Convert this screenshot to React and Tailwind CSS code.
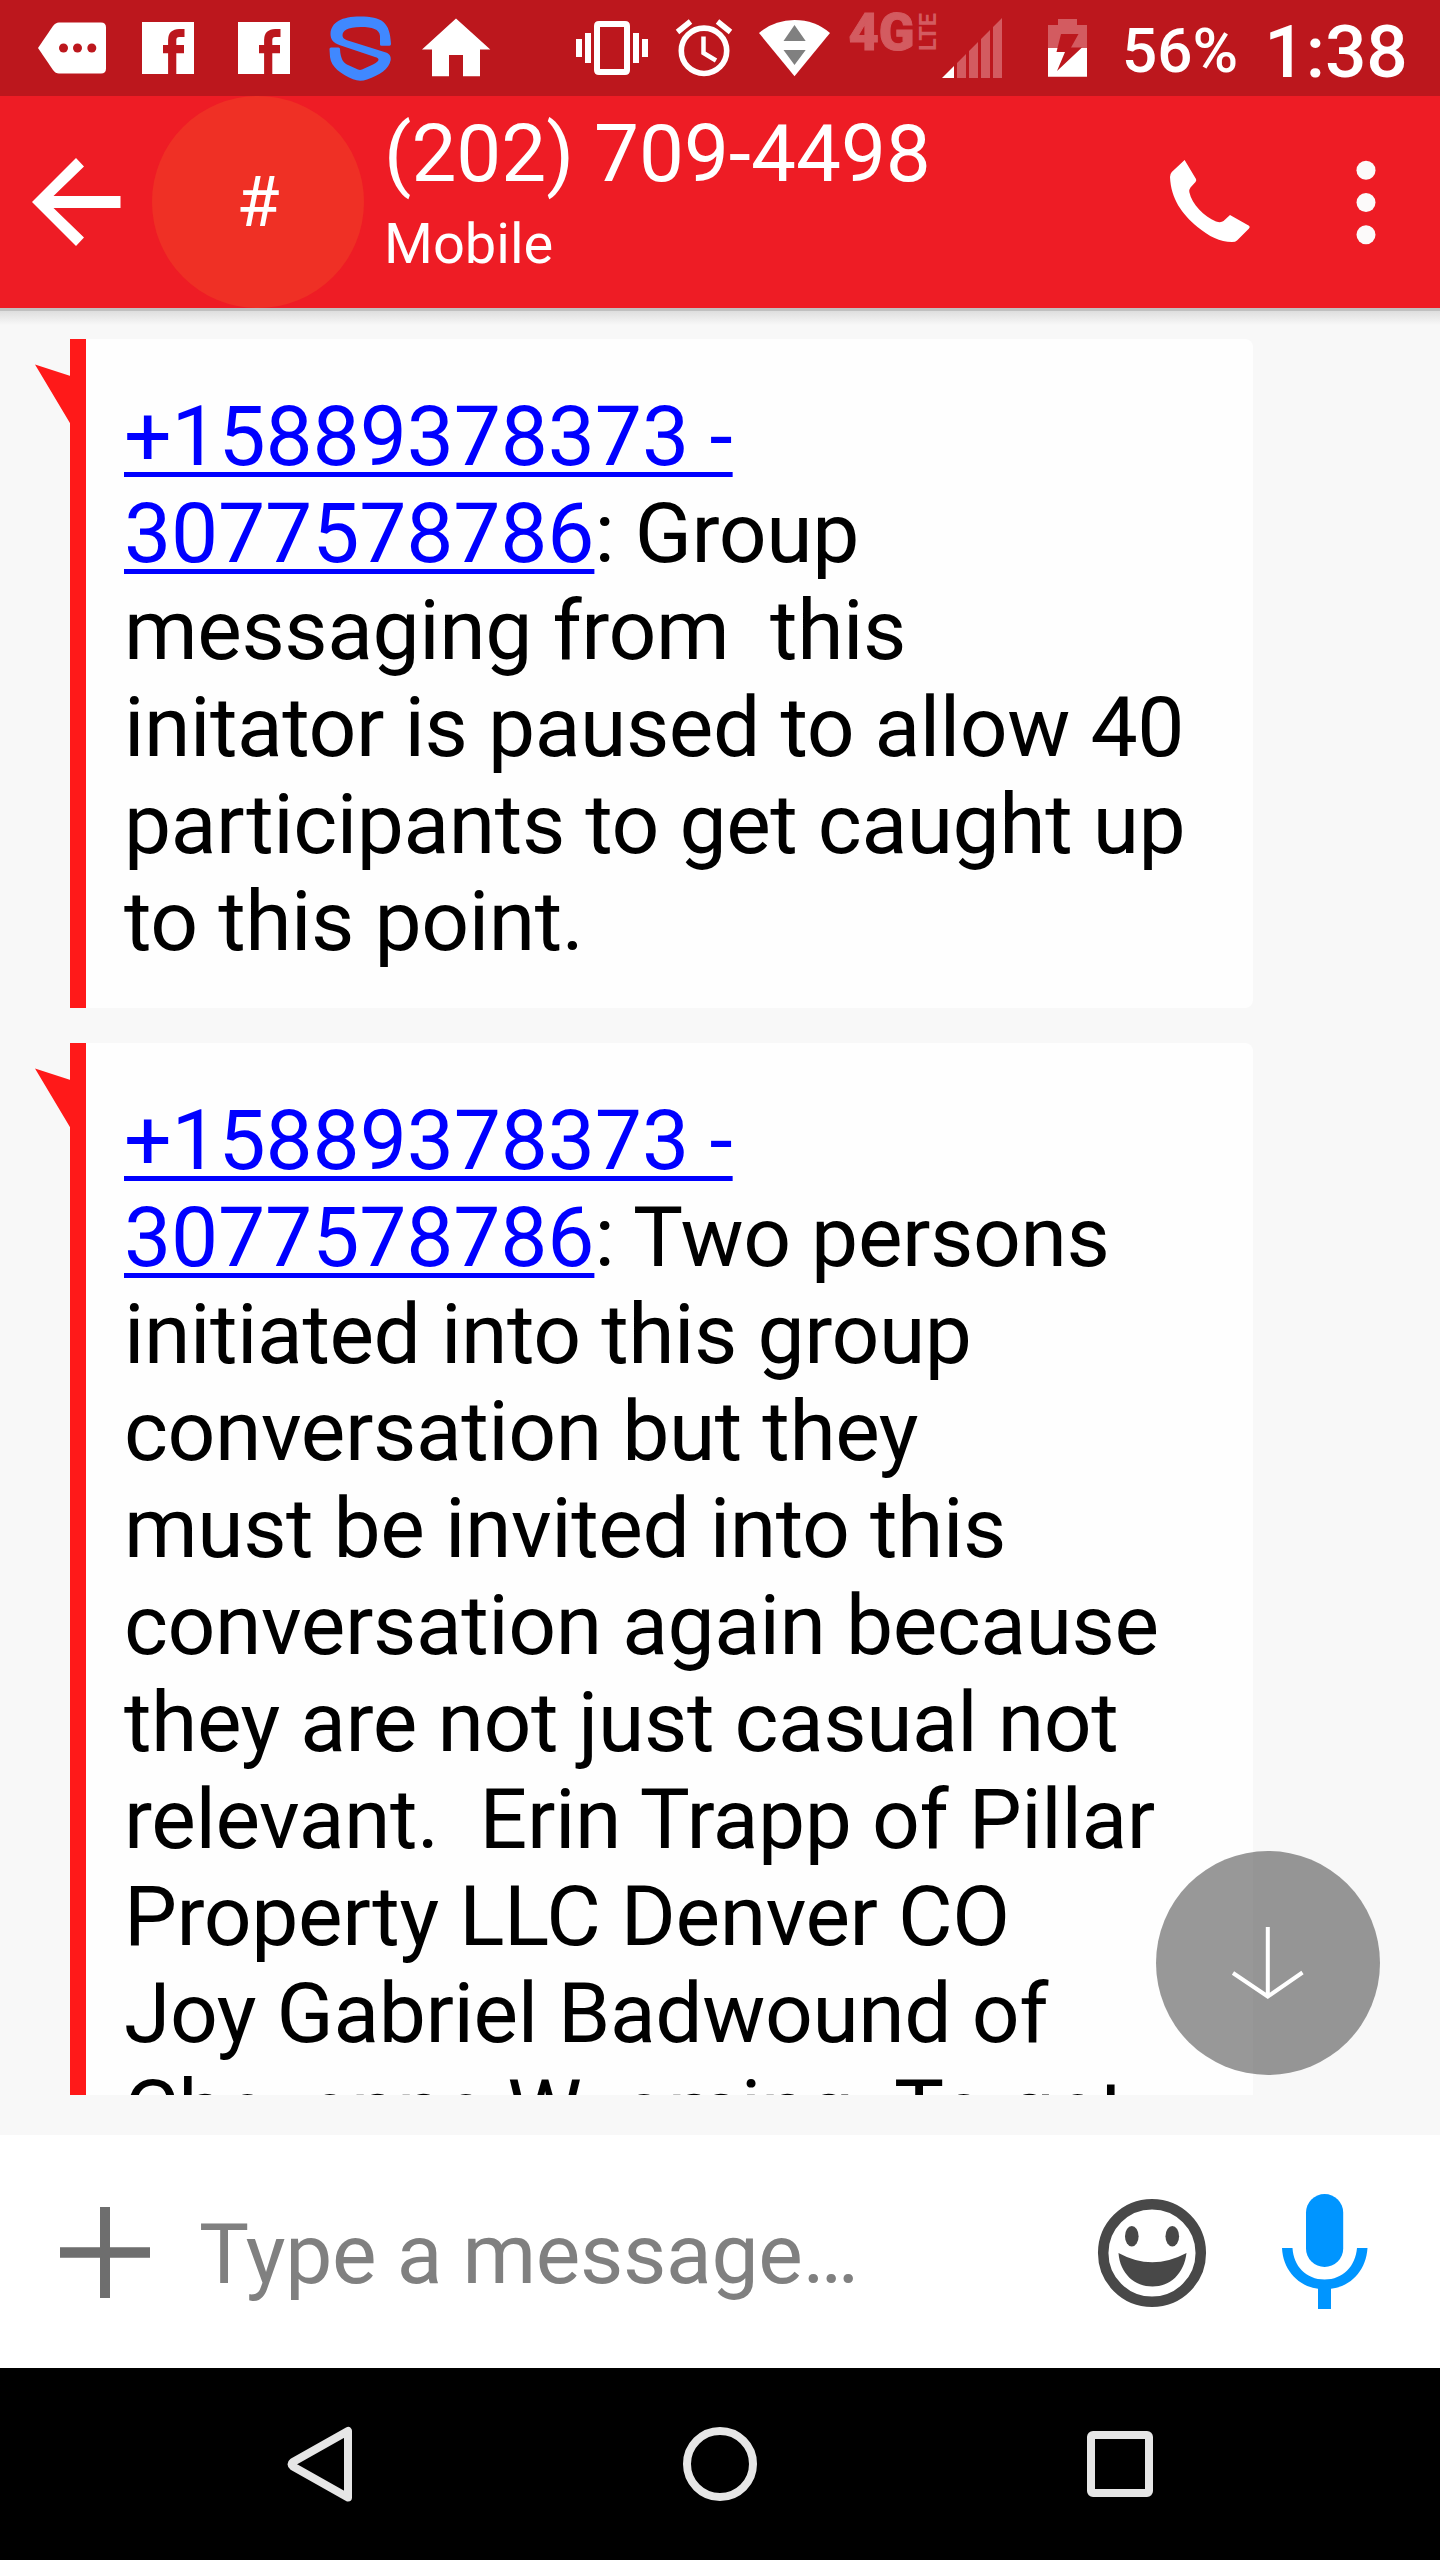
import React from 'react'

const messages = [
  {
    id: 1,
    sender: ['+15889378373 -', '3077578786'],
    first: ': Group',
    lines: [
      'messaging from  this',
      'initator is paused to allow 40',
      'participants to get caught up',
      'to this point.'
    ]
  },
  {
    id: 2,
    sender: ['+15889378373 -', '3077578786'],
    first: ': Two persons',
    lines: [
      'initiated into this group',
      'conversation but they',
      'must be invited into this',
      'conversation again because',
      'they are not just casual not',
      'relevant.  Erin Trapp of Pillar',
      'Property LLC Denver CO',
      'Joy Gabriel Badwound of',
      'Cheyenne Wyoming. To get'
    ]
  }
]

function FacebookIcon() {
  return (
    <svg viewBox="120 0 96 96" className="h-24 w-24 shrink-0">
      <path d="M142 22h52v52H142z" fill="#fff" />
      <path d="M172.200 74V40q0-7 7-7h5.300M163 49.200h21" fill="none" stroke="#bc171d" strokeWidth="8.200" />
    </svg>
  )
}

function StatusBar() {
  return (
    <div className="flex h-24 bg-[#bc171d] pl-6 text-white">
      <svg viewBox="24 0 96 96" className="h-24 w-24 shrink-0">
        <path d="M38 48 53 26q2.500-3.500 6-3.500h42q5 0 5 5v41q0 5-5 5H59q-3.500 0-6-3.500z" fill="#fff" />
        <g fill="#bc171d">
          <circle cx="63.500" cy="48" r="4.500" />
          <circle cx="77.500" cy="48" r="4.500" />
          <circle cx="91.800" cy="48" r="4.500" />
        </g>
      </svg>
      <FacebookIcon />
      <FacebookIcon />
      {/* Security app */}
      <svg viewBox="312 0 96 96" className="h-24 w-24 shrink-0">
        <path
          d="M380 44.500V36C379.500 29 372 27 361 27C347 27 342.500 31 342.500 35.500C342.500 38 344 39 347 40.300L386 52.500C389.500 53.800 391 56 390.700 60C389 69 380 75 367 79.500Q360 82 353 79.300C341 74 331 67 330 57L329.500 49Q329.500 47.500 331 47.500H338.500Q340 47.500 340 49C340.500 60 344 63 348 65L358 69.600Q360 70.500 362 69.600L373 64.500C380 61 380 58.500 375 57L340 45.300C333 43 330.500 39 330.500 34C331 22 342 16.500 360 16.500C382 16.500 390 22 391 44Q391 45.700 389.500 45.700H381.500Q380 45.700 380 44.500z"
          fill="#4088ff"
        />
      </svg>
      <svg viewBox="408 0 96 96" className="h-24 w-24 shrink-0">
        <path d="M456 18.500 490.300 49.500H480V76.300H463V55H449V76.300H432V49.500H422z" fill="#fff" />
      </svg>

      <div className="ml-[60px] flex">
        {/* Vibrate */}
        <svg viewBox="564 0 96 96" className="h-24 w-24 shrink-0" fill="#fff">
          <path d="M576 39h6v18h-6zM585 33h6v30h-6zM633 33h6v30h-6zM642 39h6v18h-6z" />
          <path d="M599 21h26q5 0 5 5v44q0 5-5 5h-26q-5 0-5-5V26q0-5 5-5zM600 27v42h24V27z" fillRule="evenodd" />
        </svg>
        {/* Alarm */}
        <svg viewBox="660 0 84 96" className="h-24 w-[84px] shrink-0" fill="none" stroke="#fff">
          <circle cx="704" cy="50.800" r="22.700" strokeWidth="5.600" />
          <path d="M703.500 36.500V53L716 60.500" strokeWidth="4.500" />
          <path d="M677.500 32 690.500 21.500M717.500 21.500 730.500 32" strokeWidth="5.500" />
        </svg>
        {/* Wi-Fi */}
        <svg viewBox="744 0 102 96" className="h-24 w-[102px] shrink-0">
          <path d="M794.500 76.300 759 33Q774 20 794.500 20T830 33z" fill="#fff" />
          <path d="M794.500 25 805.700 41H783.500zM783.500 50H805.700L794.500 65z" fill="#808080" />
        </svg>
        {/* Network type */}
        <svg viewBox="846 0 90 96" className="h-24 w-[90px] shrink-0 overflow-visible" fill="#d35b60">
          <text x="848.500" y="50" fontSize="51" fontWeight="900" textLength="66" lengthAdjust="spacingAndGlyphs" stroke="#d35b60" strokeWidth="1" className="font-[Roboto,sans-serif]">4G</text>
          <text transform="translate(935.500 51) rotate(-90)" fontSize="24" fontWeight="700" textLength="38" lengthAdjust="spacingAndGlyphs" className="font-[Roboto,sans-serif]">LTE</text>
        </svg>
        {/* Signal */}
        <svg viewBox="936 0 72 96" className="h-24 w-[72px] shrink-0">
          <path d="M942 78 954 66V78z" fill="#fff" />
          <path d="M957 63l9-9v24h-9zM969 51l9-9v36h-9zM981 39l9-9v48h-9zM993 27l9-9v60h-9z" fill="#d35b60" />
        </svg>
        {/* Battery */}
        <svg viewBox="1008 0 114 96" className="h-24 w-[114px] shrink-0">
          <path d="M1048 25h10v-6h19v6h10v23h-39z" fill="#d35b60" />
          <path d="M1048 48h39v28.700h-39z" fill="#fff" />
          <path d="M1061 34h17.500L1071 47.500H1082L1057 71 1065 52H1056.500z" fill="#bc171d" />
        </svg>
      </div>
      <span className="mt-[15px] text-[62px] leading-[72px] font-medium">56%</span>
      <span className="mt-[14px] ml-[26px] text-[73px] leading-[76px] font-medium">1:38</span>
    </div>
  )
}

function Header() {
  return (
    <div className="flex h-[212px] bg-[#ee1c25] text-white">
      <svg viewBox="0 96 152 212" className="h-[212px] w-[152px] shrink-0" fill="#fff">
        <path d="M32 202 76 158 84 166.500 53.500 196H120.500V208H53.500L84 237.500 76 246z" />
      </svg>
      <div className="flex h-[212px] w-[212px] shrink-0 items-center justify-center rounded-full bg-[#ef3025] text-[70px] leading-[82px]">
        #
      </div>
      <div className="flex grow flex-col pt-3 pl-5">
        <span className="text-[80px] leading-[92px]">(202) 709-4498</span>
        <span className="text-[56px] leading-[88px]">Mobile</span>
      </div>
      <svg viewBox="1140 96 140 212" className="h-[212px] w-[140px] shrink-0" fill="#fff">
        <path d="M1184.600 160 1171.800 172Q1170 174 1170 177C1171 199 1182 214 1197.500 227C1209 236.500 1220 242 1232 242Q1235.500 242 1237 240.500L1249 228.500Q1250.500 227 1249 225.700L1230 215 1223.500 221Q1221 223 1216 221.500C1204 216 1192 205 1189.300 192Q1189 189.500 1190.500 187.500L1195.500 182Q1196.700 180.500 1196 179z" />
      </svg>
      <svg viewBox="1280 96 160 212" className="h-[212px] w-[160px] shrink-0" fill="#fcfafa">
        <circle cx="1366" cy="170.300" r="9.500" />
        <circle cx="1366" cy="202.500" r="9.500" />
        <circle cx="1366" cy="234.700" r="9.500" />
      </svg>
    </div>
  )
}

function Message({ message }) {
  return (
    <div className="relative ml-[70px] w-[1183px] rounded-r-lg border-l-16 border-[#ff1919] bg-[#fefefe] pt-[49px] pb-[38px] pl-[38px] text-[84px] leading-[97px] tracking-[-0.41px] whitespace-pre text-black">
      <svg viewBox="0 0 37 60" className="absolute top-[25px] left-[-51px] h-[60px] w-[37px]">
        <path d="M0 .5 35.500 12H37V60H35.500z" fill="#ff1919" />
      </svg>
      <p className="tracking-[-0.17px] text-[#0000ff]">
        <span className="underline decoration-[5px] underline-offset-[7px]">{message.sender[0]}</span>
      </p>
      <p>
        <span className="tracking-[-0.17px] text-[#0000ff] underline decoration-[5px] underline-offset-[7px]">
          {message.sender[1]}
        </span>
        {message.first}
      </p>
      {message.lines.map((line) => (
        <p key={line}>{line}</p>
      ))}
    </div>
  )
}

function Composer() {
  return (
    <div className="flex h-[233px] items-center bg-white">
      <svg viewBox="0 2135 196 233" className="h-[233px] w-[196px] shrink-0" fill="#6e6e6e">
        <path d="M100 2207h10v40.300h40v10.400h-40V2298h-10v-40.300H60v-10.400h40z" />
      </svg>
      <span className="grow pt-[6px] pl-[3px] text-[84px] leading-[98px] tracking-[-0.35px] text-[#808080]">
        Type a message…
      </span>
      {/* Emoji */}
      <svg viewBox="1080 2135 146 233" className="h-[233px] w-[146px] shrink-0" fill="#484848">
        <circle cx="1152" cy="2253" r="48.800" fill="none" stroke="#484848" strokeWidth="10.500" />
        <ellipse cx="1131.800" cy="2236.300" rx="6.800" ry="10.300" />
        <ellipse cx="1172.300" cy="2236.300" rx="6.800" ry="10.300" />
        <path d="M1118.500 2253Q1152 2271.500 1186.500 2253C1184 2274 1170 2286.500 1152.500 2286.500S1120 2274 1118.500 2253z" />
      </svg>
      {/* Voice */}
      <svg viewBox="1226 2135 214 233" className="h-[233px] w-[214px] shrink-0" fill="#0095ff">
        <rect x="1306" y="2194" width="37.200" height="73" rx="18.600" />
        <path d="M1282 2248H1292.500C1293.500 2266 1306 2279.500 1324.600 2279.500S1355.500 2266 1357 2248H1367.500C1366 2270 1352 2286 1331 2288.800V2309H1318V2288.800C1298 2286 1283 2270 1282 2248z" />
      </svg>
    </div>
  )
}

function NavBar() {
  return (
    <div className="flex h-48 items-center justify-center gap-[300px] bg-black">
      <svg viewBox="270 2414 100 100" className="h-[100px] w-[100px]" fill="none" stroke="#e6e6e6" strokeWidth="8" strokeLinejoin="round">
        <path d="M348 2431V2497.500L293 2466.500Q290 2464.300 293 2462z" />
      </svg>
      <svg viewBox="670 2414 100 100" className="h-[100px] w-[100px]" fill="none" stroke="#e6e6e6" strokeWidth="8">
        <circle cx="720" cy="2464" r="33" />
      </svg>
      <svg viewBox="1070 2414 100 100" className="h-[100px] w-[100px]" fill="none" stroke="#e6e6e6" strokeWidth="8">
        <rect x="1091" y="2435" width="58" height="58" rx="2" />
      </svg>
    </div>
  )
}

export default function App() {
  return (
    <div className="flex h-[2560px] w-[1440px] flex-col overflow-hidden bg-[#f8f8f8] font-[Roboto,sans-serif]">
      <StatusBar />
      <Header />
      <div className="relative h-[1827px]">
        <div className="h-[3px] bg-[#c0c0c0]"></div>
        <div className="h-[14px] bg-gradient-to-b from-[#dedede] to-[#f8f8f8]"></div>
        <div className="flex h-[1770px] flex-col gap-[35px] overflow-hidden pt-[14px]">
          {messages.map((message) => (
            <Message key={message.id} message={message} />
          ))}
        </div>
        {/* Jump to latest */}
        <button className="absolute top-[1543px] right-[60px] flex h-56 w-56 items-center justify-center rounded-full bg-black/40">
          <svg viewBox="1228 1923 80 80" className="h-20 w-20" fill="none" stroke="#fff" strokeWidth="4">
            <path d="M1267.800 1927V1996M1233 1973 1267.800 1996.500 1302.500 1972.500" />
          </svg>
        </button>
      </div>
      <Composer />
      <NavBar />
    </div>
  )
}
